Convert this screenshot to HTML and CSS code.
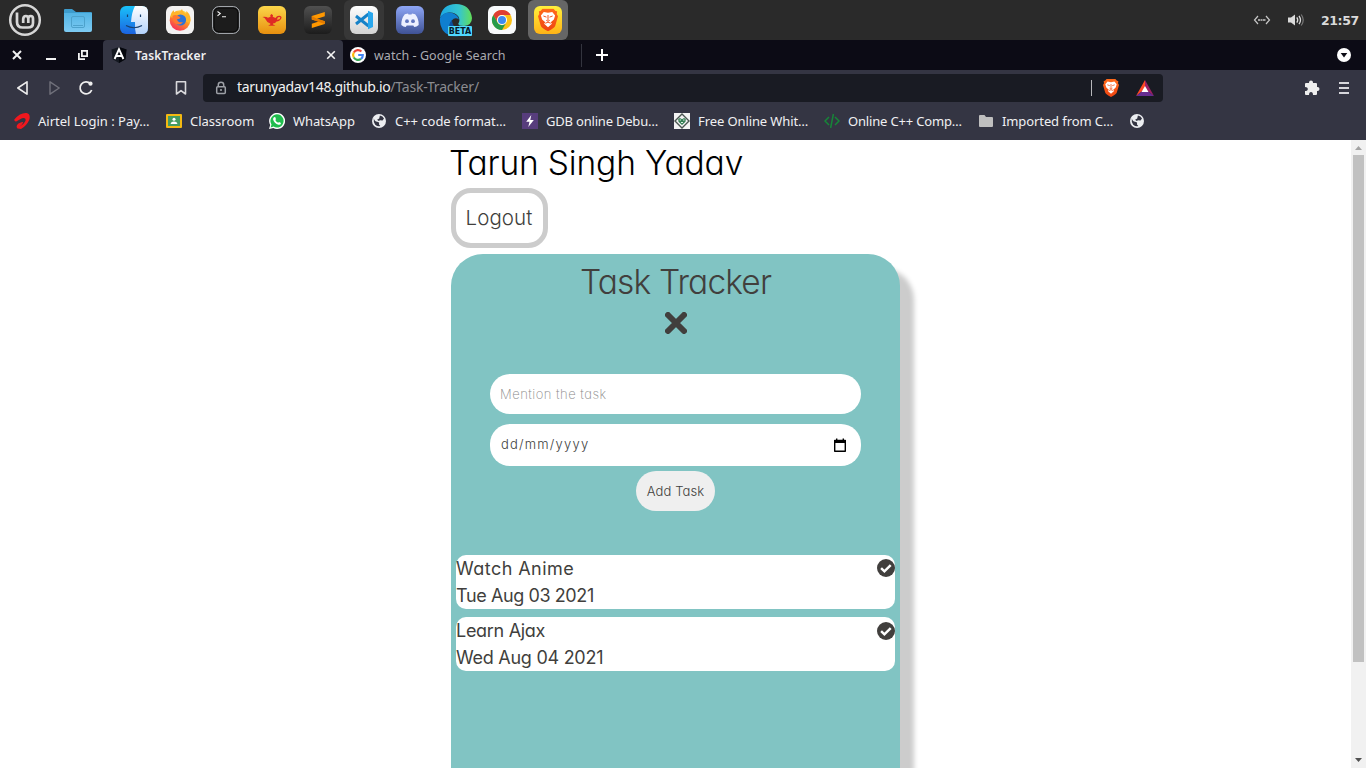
FILE: index.html
```html
<!DOCTYPE html>
<html lang="en">
<head>
<meta charset="utf-8">
<title>TaskTracker</title>
<link rel="stylesheet" href="styles.css">
</head>
<body>
<svg class="defs" width="0" height="0">
  <defs>
    <linearGradient id="folder" x2="0" y2="1"><stop stop-color="#53b4e4"/><stop offset="1" stop-color="#7dcbf3"/></linearGradient>
    <linearGradient id="blue" x2="0" y2="1"><stop stop-color="#19c2fa"/><stop offset="1" stop-color="#1b63e0"/></linearGradient>
    <linearGradient id="pale" x2="0" y2="1"><stop stop-color="#fff"/><stop offset="1" stop-color="#b4d3fb"/></linearGradient>
    <linearGradient id="fire" x1=".8" x2=".2" y2="1"><stop stop-color="#ffe44c"/><stop offset=".45" stop-color="#ff9524"/><stop offset="1" stop-color="#f5235f"/></linearGradient>
    <linearGradient id="gold" x2="0" y2="1"><stop stop-color="#fbd64a"/><stop offset="1" stop-color="#e8900f"/></linearGradient>
    <linearGradient id="dark" x2="0" y2="1"><stop stop-color="#505050"/><stop offset="1" stop-color="#1c1c1c"/></linearGradient>
    <linearGradient id="white" x2="0" y2="1"><stop stop-color="#fff"/><stop offset="1" stop-color="#d2d2d2"/></linearGradient>
    <linearGradient id="disc" x2="0" y2="1"><stop stop-color="#8ea6f6"/><stop offset="1" stop-color="#3f5295"/></linearGradient>
    <linearGradient id="edge" x2="1"><stop stop-color="#1ba8e6"/><stop offset=".6" stop-color="#36c5cf"/><stop offset="1" stop-color="#62df58"/></linearGradient>
    <linearGradient id="yellow" x2="0" y2="1"><stop stop-color="#fff03c"/><stop offset="1" stop-color="#ffb317"/></linearGradient>
    <linearGradient id="lion" x2="0" y2="1"><stop stop-color="#ff6a1a"/><stop offset="1" stop-color="#ee4412"/></linearGradient>
    <symbol id="globe" viewBox="0 0 16 16"><circle cx="8" cy="8" r="7" fill="#eceef1"/><path d="M2.8 5.2Q3.5 8.6 6.2 8.7L8.1 9.4 8 11.4 9.3 13.1Q6.7 13.9 4.2 11.7 2.2 9.2 2.8 5.2M8.9 2.5Q11.9 3.1 13 5.4L11.5 7.4 9.1 7.2 7.7 8 6.1 6.8 8.2 5.4Z" fill="#343543"/></symbol>
    <symbol id="lionface" viewBox="0 0 16 18"><path d="M3.6 0H12.4L14 1.7 15.3 2 15 4.2 16 6 13.8 13.6Q13.2 15.5 8 18 2.8 15.5 2.2 13.6L0 6 1 4.2.7 2 2 1.7Z" fill="url(#lion)"/><path d="M4.6 2.6 8 3.2 11.4 2.6 13.7 5.3 12.7 8.5 10.2 10.7 11.1 12 8 14.8 4.9 12 5.8 10.7 3.3 8.5 2.3 5.3Z" fill="#fff"/><path d="M4.3 5.8 6.8 6.7M11.7 5.8 9.2 6.7M8 5V9.4M6.6 9.2 8 10.1 9.4 9.2M5.8 11.6 8 10.7 10.2 11.6" fill="none" stroke="#f25420" stroke-width=".8"/></symbol>
    <symbol id="check" viewBox="0 0 18 18"><circle cx="9" cy="9" r="9" fill="#413f3d"/><path d="M4.1 9.2 7.4 12.3 13.7 6.1" fill="none" stroke="#fff" stroke-width="2.5"/></symbol>
  </defs>
</svg>

<header class="panel">
  <div class="launchers">
    <span class="launcher"><svg width="34" height="34" viewBox="0 0 34 34" fill="none" stroke="#d6d6d6"><circle cx="17" cy="17" r="14.8" stroke-width="2.5"/><path d="M9 9.5V19Q9 24.5 14.5 24.5H20Q25 24.5 25 20V15.8Q25 13 22.7 13T20.3 15.8V20M20.3 16Q20.3 13 17.9 13T15.2 16V20" stroke-width="2.7"/></svg></span>
    <span class="launcher launcher-files"><svg width="28" height="24" viewBox="0 0 28 24"><path d="M0 2Q0 1 1 1H8L12 4H27Q28 4 28 5V9H0Z" fill="#3d9ccd"/><path d="M0 5H28V22Q28 24 26 24H2Q0 24 0 22Z" fill="url(#folder)"/><rect x="7.5" y="8.5" width="13" height="11" rx="1.5" fill="none" stroke="#4da2cc"/><path d="M9 17.5H19" stroke="#4da2cc"/></svg></span>
    <span class="launcher"><svg width="28" height="28" viewBox="0 0 28 28"><rect width="28" height="28" rx="6" fill="url(#blue)"/><path d="M15 0H22Q28 0 28 6V22Q28 28 22 28H16Q14.7 23 15 16H11Q11.7 6 15 0Z" fill="url(#pale)"/><path d="M7.5 8.5V11M20.5 8.5V11M6 19.5Q14 24 22 19.5" fill="none" stroke="#17406d" stroke-width="1.2"/></svg></span>
    <span class="launcher"><svg width="28" height="28" viewBox="0 0 28 28"><rect width="28" height="28" rx="6" fill="#f3f2f1"/><circle cx="14" cy="14.5" r="10.3" fill="url(#fire)"/><path d="M4.2 11Q5 6 8 4.2V6.8Q11 5.3 13 7L16 3Q17.2 7 20 8L20.5 5Q26 10 24 17Z" fill="#ffb52b"/><circle cx="14.5" cy="14" r="5.6" fill="#2e73d8"/><path d="M6.5 10Q9 8 12.5 10.2L14.5 11.2Q14 13 11 13.2 11.5 17 17 16.2 14 20 9.4 17.6 6 15 6.5 10" fill="#ff7831"/></svg></span>
    <span class="launcher"><svg width="28" height="28" viewBox="0 0 28 28"><rect x=".7" y=".7" width="26.6" height="26.6" rx="6" fill="#171717" stroke="#bfc4ca" stroke-width="1"/><rect x="2" y="2" width="24" height="24" rx="5" fill="#1c1c1c" stroke="#070707"/><path d="M5.5 5.5 8.3 7.6 5.5 9.8M10 10.8H14" fill="none" stroke="#f2f2f2" stroke-width="1.1"/></svg></span>
    <span class="launcher"><svg width="28" height="28" viewBox="0 0 28 28"><rect width="28" height="28" rx="6" fill="url(#gold)"/><path d="M4.5 11Q8 10.5 10 11.8L12.6 10.8 12.2 9.3 13.6 8 15 9.3 14.7 10.8 17.5 12Q19 9.5 21.5 9.8 24.8 10.5 22.8 13.2 21 15.6 18.5 15.4 17.4 17.2 15 17.5L14.8 18.3 17.4 19.8H10.2L12.5 18.3 12.2 17.4Q9 16.8 8 13.9 7 11.7 4.5 11M18.9 13.8Q22 13.8 22.3 11.6 21.6 10.4 19.8 11.4Z" fill="#df2a24" fill-rule="evenodd"/></svg></span>
    <span class="launcher"><svg width="28" height="28" viewBox="0 0 28 28"><rect width="28" height="28" rx="6" fill="url(#dark)"/><path d="M7.8 10 20.8 6V10.3L13 12.7 20.8 15.2V18L7.8 22V17.8L14.7 15.6 7.8 13.4Z" fill="#ff9800"/><path d="M7.8 10V13.4L20.8 18V15.2L13 12.7" fill="#e47b00"/></svg></span>
    <span class="launcher launcher-open"><svg width="28" height="28" viewBox="0 0 28 28"><rect width="28" height="28" rx="6" fill="url(#white)"/><path d="M6 10 18.5 20M6 18 18.5 8" stroke="#1682c8" stroke-width="3"/><path d="M18 4.8 23 7V21L18 23.2Z" fill="#29a7ed"/></svg></span>
    <span class="launcher"><svg width="28" height="28" viewBox="0 0 28 28"><rect width="28" height="28" rx="6" fill="url(#disc)"/><path d="M8.8 8.2 12 7.4 12.5 8.5H15.5L16 7.4 19.2 8.2Q23 13 22.7 19 20.5 20.8 18.3 21L17.3 19.4H10.7L9.7 21Q7.5 20.8 5.3 19 5 13 8.8 8.2Z" fill="#edf0ff"/><circle cx="11" cy="15.2" r="1.9" fill="#6176be"/><circle cx="17" cy="15.2" r="1.9" fill="#6176be"/></svg></span>
    <span class="launcher"><svg width="34" height="34" viewBox="0 0 34 34"><path d="M1 15Q3 1 17 1 31 1 33 15 33 22 25 23 19 23 19.3 20.5 21.5 17.5 19.4 13.5 16 9 10 9.5 4 10 1 15Z" fill="url(#edge)"/><path d="M1 15Q5 8.5 12.5 9.8 18.5 11.2 20 16.6 16 13.5 12.8 17.5 10 23 14 28L20 33Q5 35 1.5 22 .7 18 1 15Z" fill="#0f7fd0"/><path d="M13 17Q8.5 21 11.5 27 14.5 33 20 33 26 32 30 27 23 29.5 17.5 25.5 13 22 13 17" fill="#0c4f9f"/><rect x="9" y="23" width="24" height="10" rx="1" fill="#50d9ff"/><text x="21" y="31" text-anchor="middle" class="beta">BETA</text></svg></span>
    <span class="launcher"><svg width="28" height="28" viewBox="0 0 28 28"><rect width="28" height="28" rx="6" fill="#f8fafc"/><circle cx="14" cy="14" r="10" fill="#fbc116"/><path d="M5.3 9A10 10 0 0 1 22.7 9H14A5 5 0 0 0 9.6 16.5Z" fill="#df3e34"/><path d="M5.3 9A10 10 0 0 0 14 24L18.4 16.5A5 5 0 0 1 9.6 16.5Z" fill="#269b4b"/><circle cx="14" cy="14" r="5" fill="#fff"/><circle cx="14" cy="14" r="4" fill="#3f8bf0"/></svg></span>
    <span class="launcher launcher-active"><svg width="28" height="28" viewBox="0 0 28 28"><rect width="28" height="28" rx="6" fill="url(#yellow)"/><use href="#lionface" x="4" y="2.5" width="20" height="23"/></svg></span>
  </div>
  <div class="tray">
    <svg width="18" height="12" viewBox="0 0 18 12" fill="none" stroke="#c8c8c8"><path d="M5 2 1.5 6 5 10M13 2 16.5 6 13 10" stroke-width="1.2"/><path d="M5 6H13" stroke-dasharray="2 .5" stroke-width="1.4"/></svg>
    <svg class="volume" width="18" height="14" viewBox="0 0 18 14"><path d="M1 4.5H4L8 1.5V12.5L4 9.5H1Z" fill="#dadada"/><path d="M9.8 4.4Q11.7 7 9.8 9.6M12 2.8Q15 7 12 11.2" fill="none" stroke="#dadada" stroke-width="1.3"/><path d="M14.2 1.5Q18.3 7 14.2 12.5" fill="none" stroke="#777" stroke-width="1.2"/></svg>
    <span class="clock">21:57</span>
  </div>
</header>

<nav class="tabs">
  <div class="window-buttons">
    <svg width="10" height="10" viewBox="0 0 10 10"><path d="M1 1 9 9M9 1 1 9" stroke="#f2f2f2" stroke-width="2"/></svg>
    <svg width="10" height="10" viewBox="0 0 10 10"><path d="M0 9H10" stroke="#f2f2f2" stroke-width="2"/></svg>
    <svg width="10" height="10" viewBox="0 0 10 10" fill="none" stroke="#f2f2f2" stroke-width="1.8"><path d="M3.9.9H9.1V6.1H3.9ZM.9 3V9.1H7"/></svg>
  </div>
  <div class="tab tab-current">
    <svg width="16" height="16" viewBox="0 0 16 16"><path d="M8 0 15.5 2.5 14.4 12.2 8 16 1.6 12.2.5 2.5Z" fill="#141820"/><path d="M8 0 15.5 2.5 14.4 12.2 8 16Z" fill="#05070d"/><path d="M3.6 12 8 2.2 12.4 12M5.4 9H10.6" stroke="#fff" stroke-width="1.9" fill="none"/></svg>
    <span class="tab-title"><span class="t-task">TaskTracker</span></span>
    <svg width="10" height="10" viewBox="0 0 10 10"><path d="M1.2 1.2 8.8 8.8M8.8 1.2 1.2 8.8" stroke="#f5f5f5" stroke-width="1.6"/></svg>
  </div>
  <div class="tab tab-other">
    <svg width="16" height="16" viewBox="0 0 16 16" fill="none" stroke-width="2.2"><circle cx="8" cy="8" r="8" fill="#fff"/><path d="M11.4 4.5A4.9 4.9 0 0 0 3.8 5.5" stroke="#ea4335"/><path d="M3.8 5.5A4.9 4.9 0 0 0 3.8 10.5" stroke="#fbbc05"/><path d="M3.8 10.5A4.9 4.9 0 0 0 11 11.9" stroke="#34a853"/><path d="M11 11.9A4.8 4.8 0 0 0 12.8 8H8.2" stroke="#4285f4"/></svg>
    <span class="t-watch">watch - Google Search</span>
  </div>
  <svg class="new-tab" width="12" height="12" viewBox="0 0 12 12"><path d="M6 0V12M0 6H12" stroke="#fff" stroke-width="2"/></svg>
  <svg class="tab-search" width="14" height="14" viewBox="0 0 14 14"><circle cx="7" cy="7" r="7" fill="#fff"/><path d="M3.7 5H10.3L7 9.4Z" fill="#0c0b15"/></svg>
</nav>

<div class="toolbar">
  <div class="nav-buttons">
    <svg width="13" height="16" viewBox="0 0 13 16"><path d="M11 1.8V14.2L1.8 8Z" fill="none" stroke="#eee" stroke-width="1.6" stroke-linejoin="round"/></svg>
    <svg width="13" height="16" viewBox="0 0 13 16"><path d="M2 1.8V14.2L11.2 8Z" fill="none" stroke="#70717b" stroke-width="1.4" stroke-linejoin="round"/></svg>
    <svg width="16" height="16" viewBox="0 0 16 16"><path d="M12.5 3.8A6 6 0 1 0 13.7 10" fill="none" stroke="#eee" stroke-width="1.7"/><circle cx="12.5" cy="3.7" r="2.1" fill="#eee"/></svg>
  </div>
  <svg width="12" height="16" viewBox="0 0 12 16"><path d="M1.5 1.8H10.5V14L6 10.6 1.5 14Z" fill="none" stroke="#d9d9dc" stroke-width="1.6" stroke-linejoin="round"/></svg>
  <div class="address">
    <svg width="12" height="14" viewBox="0 0 12 14"><path d="M3.3 6V3.7Q3.3 1.2 6 1.2T8.7 3.7V6" fill="none" stroke="#9da0a6" stroke-width="1.5"/><rect x="1.7" y="5.7" width="8.6" height="6.8" rx="1" fill="none" stroke="#9da0a6" stroke-width="1.5"/><circle cx="6" cy="9" r="1.1" fill="#9da0a6"/></svg>
    <span class="url">tarunyadav148.github.io<span class="path">/Task-Tracker/</span></span>
    <span class="divider"></span>
    <svg class="shield" width="16" height="18"><use href="#lionface" width="16" height="18"/></svg>
    <svg width="18" height="16" viewBox="0 0 18 16"><path d="M9 0 0 16 9 9Z" fill="#ff4724"/><path d="M9 0 18 16 9 9Z" fill="#9e1f63"/><path d="M0 16H18L9 9Z" fill="#662d91"/><path d="M9 6 5.5 12H12.5Z" fill="#fff"/></svg>
  </div>
  <div class="menu-buttons">
    <svg width="16" height="16" viewBox="0 0 16 16"><path d="M1 4Q1 3 2 3H5V2.5Q5 .5 7 .5T9 2.5V3H12Q13 3 13 4V7H13.5Q15.5 7 15.5 9T13.5 11H13V14Q13 15 12 15H9Q9 12 7 12T5 15H2Q1 15 1 14V11Q3.8 11 3.8 9T1 7Z" fill="#eee"/></svg>
    <svg width="10" height="12" viewBox="0 0 10 12"><path d="M0 1H10M0 6H10M0 11H10" stroke="#d6d6db" stroke-width="2"/></svg>
  </div>
</div>

<div class="bookmarks">
  <span class="bookmark b1"><svg width="16" height="16" viewBox="0 0 16 16"><path d="M.3 6.5Q6.5-.5 12.5.1 17 1 15.2 7 12.5 13 7 16L3.5 15.6Q1.3 13 4.5 10.6 8 8.4 9.3 9.3 8.3 11.8 5.3 13.7 10.5 10.6 11.6 7.4 12 4.2 8 5.3 4.5 7 2.2 8.4.2 8.7.3 6.5" fill="#f0181e"/></svg><span>Airtel Login : Pay…</span></span>
  <span class="bookmark b2"><svg width="16" height="14" viewBox="0 0 16 14"><rect width="16" height="14" rx="1" fill="#f4b912"/><rect x="2" y="2" width="12" height="10" fill="#459b61"/><circle cx="8" cy="5.2" r="1.5" fill="#fff"/><path d="M4.5 10Q5 7.6 8 7.6T11.5 10Z" fill="#fff"/></svg><span>Classroom</span></span>
  <span class="bookmark b3"><svg width="16" height="16" viewBox="0 0 16 16"><path d="M0 16 1.2 12A8 8 0 1 1 4.3 15Z" fill="#fff"/><path d="M1.6 14.4 2.5 11.6A6.6 6.6 0 1 1 4.6 13.6Z" fill="#20bd4e"/><path d="M5 4.2 6.2 4.1 7 6.2 6.3 7Q7.2 8.9 9.2 9.8L10 8.9 12 9.9Q11.8 12 9.5 11.8 5.2 10.6 4.1 6.6 3.9 5 5 4.2" fill="#fff"/></svg><span>WhatsApp</span></span>
  <span class="bookmark b4"><svg width="16" height="16"><use href="#globe"/></svg><span>C++ code format…</span></span>
  <span class="bookmark b5"><svg width="16" height="16" viewBox="0 0 16 16"><rect width="16" height="16" fill="#573d7c"/><path d="M9.3 2 4.2 8.7H7.5L6.3 14 11.8 6.9H8.3Z" fill="#fff"/></svg><span>GDB online Debu…</span></span>
  <span class="bookmark b6"><svg width="16" height="16" viewBox="0 0 16 16"><rect width="16" height="16" fill="#f3f3f3"/><path d="M8 1 15 8 8 15 1 8Z" fill="none" stroke="#4a5550" stroke-width="1.4"/><path d="M4.2 6 6 5 8 6.2 10 5 11.8 6 11.5 8.8 8 12 4.5 8.8Z" fill="#367f55"/><path d="M5.5 7H7M9 7H10.5M7 9.5H9" stroke="#d9eadf"/></svg><span>Free Online Whit…</span></span>
  <span class="bookmark b7"><svg width="16" height="16" viewBox="0 0 16 16"><path d="M5 4 1 8 5 12M11 4 15 8 11 12M9.4 1 6.6 15" fill="none" stroke="#168638" stroke-width="1.5"/></svg><span>Online C++ Comp…</span></span>
  <span class="bookmark b8"><svg width="14" height="12" viewBox="0 0 14 12"><path d="M0 1Q0 0 1 0H5.5L7 2H13Q14 2 14 3V11Q14 12 13 12H1Q0 12 0 11Z" fill="#bfbfbf"/></svg><span>Imported from C…</span></span>
  <span class="bookmark b9"><svg width="16" height="16"><use href="#globe"/></svg></span>
</div>

<div class="viewport">
  <main class="page">
    <div class="content">
      <h1 class="user">Tarun Singh Yadav</h1>
      <button class="logout">Logout</button>
      <section class="card">
        <h2 class="heading">Task Tracker</h2>
        <svg class="close" width="22" height="22" viewBox="0 0 22 22"><path d="M3 3 19 19M19 3 3 19" stroke="#413f3d" stroke-width="6" stroke-linecap="round"/></svg>
        <form class="form">
          <div class="field field-task">Mention the task</div>
          <div class="field field-date"><span>dd/mm/yyyy</span><svg width="14" height="15" viewBox="0 0 14 15"><path d="M1.7 2.5H12.3V13.2H1.7Z" fill="none" stroke="#000" stroke-width="1.4" stroke-linejoin="round"/><path d="M1 2H13V5H1ZM3 .5H4.4V3H3ZM9.6.5H11V3H9.6Z"/></svg></div>
          <button class="add" type="button">Add Task</button>
        </form>
        <div class="tasks">
          <article class="task"><div><p class="n1">Watch Anime</p><p class="d1">Tue Aug 03 2021</p></div><svg width="18" height="18"><use href="#check"/></svg></article>
          <article class="task"><div><p class="n2">Learn Ajax</p><p class="d2">Wed Aug 04 2021</p></div><svg width="18" height="18"><use href="#check"/></svg></article>
        </div>
      </section>
    </div>
  </main>
  <aside class="scrollbar">
    <svg width="15" height="15" viewBox="0 0 15 15"><path d="M4 10H11L7.5 6Z" fill="#a3a3a3"/></svg>
    <div class="thumb"></div>
    <svg class="down" width="15" height="15" viewBox="0 0 15 15"><path d="M4 5H11L7.5 9Z" fill="#505050"/></svg>
  </aside>
</div>
</body>
</html>
```
FILE: styles.css
```css
* { box-sizing: border-box; }
body { margin: 0; width: 1366px; height: 768px; overflow: hidden; background: #fff; font-family: "Noto Sans", "Open Sans", sans-serif; font-size: 13px; display: flex; flex-direction: column; }
svg { display: block; flex: none; }
span, h1, h2, p { white-space: nowrap; }
.defs { position: absolute; }
h1, h2, p { margin: 0; }

.panel { height: 40px; flex: none; background: #2a2a2a; display: flex; justify-content: space-between; }
.launchers { display: flex; gap: 6px; padding-left: 5px; }
.launcher { width: 40px; height: 40px; display: flex; align-items: center; justify-content: center; border-radius: 6px; }
.launcher-files { margin: 0 10px 0 7px; }
.launcher-open { background: #373737; }
.launcher-active { background: #666; }
.beta { font: bold 8px "DejaVu Sans", sans-serif; fill: #071a2a; }
.tray { display: flex; align-items: center; padding-right: 8px; }
.volume { margin: 0 16px 0 16px; }
.clock { font: bold 12.5px "DejaVu Sans", sans-serif; color: #dadada; width: 37px; letter-spacing: -.4px; }

.tabs { height: 30px; flex: none; background: #0c0b15; display: flex; align-items: center; }
.window-buttons { width: 103px; display: flex; gap: 24px; padding-left: 12px; }
.window-buttons svg:last-child { margin-left: -2px; }
.tab { height: 30px; display: flex; align-items: center; color: #aaaab0; }
.tab-current { width: 240px; background: #343543; border-radius: 4px 4px 0 0; padding: 0 7px 0 8px; color: #f0f0f2; font-weight: 600; }
.tab-title { flex: 1; padding-left: 8px; }
.tab-other { width: 239px; height: 23px; border-right: 1px solid #33343e; padding-left: 7px; gap: 8px; }
.new-tab { margin-left: 14px; }
.tab-search { margin: 0 15px 0 auto; }
.t-task { font-size: 12px; letter-spacing: .15px; }
.t-watch { font-size: 12.5px; letter-spacing: .04px; }

.toolbar { height: 36px; flex: none; background: #343543; display: flex; align-items: center; padding-left: 16px; }
.nav-buttons { display: flex; gap: 19px; align-items: center; width: 159px; }
.nav-buttons svg:last-child { margin-left: -2px; }
.address { width: 960px; height: 28px; margin-left: 16px; border-radius: 4px; background: #191b23; display: flex; align-items: center; padding: 0 9px 0 12px; }
.url { font-size: 14px; line-height: 20px; letter-spacing: -.35px; color: #f2f2f2; padding: 0 0 2px 10px; flex: 1; }
.path { color: #8b8c91; letter-spacing: -.2px; }
.divider { width: 1px; height: 16px; background: #b7b7bb; }
.shield { margin: 0 17px 0 11px; }
.menu-buttons { margin-left: auto; display: flex; align-items: center; gap: 19px; padding-right: 17px; }

.bookmarks { height: 34px; flex: none; background: #343543; display: flex; align-items: center; color: #f0f0f2; padding: 0 0 4px 14px; }
.bookmark { display: flex; align-items: center; gap: 8px; font-size: 13px; }
.b1 { width: 152px; } .b2 { width: 103px; } .b3 { width: 102px; letter-spacing: -.1px; } .b4 { width: 151px; letter-spacing: -.03px; }
.b5 { width: 152px; letter-spacing: -.2px; } .b6 { width: 150px; letter-spacing: -.1px; } .b7 { width: 155px; letter-spacing: -.17px; } .b8 { width: 150px; gap: 9px; letter-spacing: -.1px; }

.viewport { flex: 1; min-height: 0; display: flex; font-family: Inter, Lato, sans-serif; font-feature-settings: "cv11"; color: #413f3d; }
.page { width: 1351px; overflow: hidden; }
.content { width: 449px; margin: 0 auto; display: flex; flex-direction: column; align-items: flex-start; }
.user { height: 48px; line-height: 47px; margin-left: -2px; font-size: 33.5px; font-weight: 330; letter-spacing: -.15px; color: #000; }
.logout { width: 97px; height: 60px; padding: 0 1px 2px 0; border: 5px solid #ccc; border-radius: 20px; background: #fff; color: #413f3d; font: 330 20.5px Inter, sans-serif; letter-spacing: .1px; font-feature-settings: inherit; }
.card { width: 449px; height: 600px; margin-top: 6px; border-radius: 32px; background: #81c4c3; box-shadow: 14px 14px 5px #ccc; display: flex; flex-direction: column; align-items: center; padding: 0 5px; }
.heading { height: 58px; line-height: 57px; font-size: 33.5px; font-weight: 300; letter-spacing: -.85px; }
.form { display: flex; flex-direction: column; align-items: center; margin-top: 40px; }
.close { flex: none; }
.field { width: 371px; border-radius: 20px; background: #fff; display: flex; align-items: center; padding: 0 10px; font-size: 13px; font-weight: 300; }
.field-task { height: 40px; color: #888; font-weight: 250; letter-spacing: .5px; padding-bottom: 1px; }
.field-date { height: 42px; margin-top: 10px; padding: 0 14px 0 11px; justify-content: space-between; letter-spacing: 1.2px; }
.field-date span { padding-bottom: 2px; }
.add { width: 79px; height: 40px; margin-top: 5px; padding: 0 0 1px; border: 0; border-radius: 20px; background: #efefef; color: #413f3d; font: 300 13px Inter, sans-serif; letter-spacing: .1px; font-feature-settings: inherit; }
.tasks { align-self: stretch; display: flex; flex-direction: column; gap: 8px; margin-top: 44px; }
.task { height: 54px; border-radius: 10px; background: #fff; display: flex; justify-content: space-between; font-size: 18px; line-height: 27px; }
.task svg { margin-top: 4px; }
.task + .task svg { margin-top: 5px; }
.n1 { letter-spacing: .45px; }
.d1 { letter-spacing: -.4px; }
.n2 { letter-spacing: -.3px; }
.d2 { letter-spacing: -.27px; }

.scrollbar { width: 15px; background: #f1f1f1; display: flex; flex-direction: column; }
.thumb { height: 507px; margin: 0 2px; background: #c1c1c1; }
.down { margin-top: auto; }
```
